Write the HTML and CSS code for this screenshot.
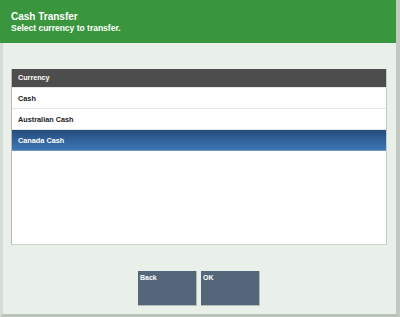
FILE: index.html
```html
<!DOCTYPE html>
<html lang="en">
  <head>
    <meta charset="UTF-8" />
    <title>Cash Transfer</title>
    <link rel="stylesheet" href="styles.css">
  </head>
  <body>
    <div class="screen">
      <div class="header">
        <h1>Cash Transfer</h1>
        <p>Select currency to transfer.</p>
      </div>
      <div class="content">
        <div class="list">
          <div class="list-head">Currency</div>
          <div class="row">Cash</div>
          <div class="row">Australian Cash</div>
          <div class="row selected">Canada Cash</div>
        </div>
        <div class="buttons">
          <button class="btn">Back</button>
          <button class="btn">OK</button>
        </div>
      </div>
    </div>
  </body>
</html>
```

FILE: styles.css
```css
* {
  box-sizing: border-box;
  margin: 0;
  padding: 0;
  font-family: "Liberation Sans", Arial, sans-serif;
}

body {
  width: 400px;
  height: 317px;
  overflow: hidden;
  background: #e9f0e9;
}

.screen {
  height: 317px;
  display: flex;
  flex-direction: column;
  border-left: 3px solid #d5dcd5;
  border-right: 4px solid #c3c8c3;
  border-bottom: 3px solid #b9c2b9;
}

.header {
  background: #3a963d;
  color: #fff;
  height: 43px;
  margin-left: -3px;
  padding: 11px 8px 0 11px;
}

.header h1 {
  font-size: 10px;
  font-weight: bold;
  line-height: 12px;
}

.header p {
  font-size: 8.5px;
  font-weight: bold;
  line-height: 11px;
}

.content {
  flex: 1;
  display: flex;
  flex-direction: column;
  padding: 26px 9px 0 8px;
}

.list {
  height: 176px;
  background: #fff;
  border-left: 1px solid #b8bcb8;
  border-right: 1px solid #c8ccc8;
  border-bottom: 1px solid #d0d4d0;
}

.list-head {
  height: 19px;
  background: #4d4d4d;
  color: #fff;
  font-size: 7.2px;
  font-weight: bold;
  line-height: 18px;
  padding-left: 6px;
  border-bottom: 1px solid #e6e6e6;
}

.row {
  height: 21px;
  font-size: 7.3px;
  font-weight: bold;
  color: #222;
  line-height: 21px;
  padding-left: 6px;
  border-bottom: 1px solid #e4e6e4;
}

.row.selected {
  background: linear-gradient(#264c7c, #3c77b6);
  color: #fff;
  border-bottom: 1px solid #6f95c2;
}

.buttons {
  display: flex;
  gap: 4px;
  margin-top: 26px;
  padding-left: 127px;
}

.btn {
  width: 59px;
  height: 35px;
  background: #546679;
  color: #fff;
  border: none;
  border-right: 1px solid #b5bdb5;
  border-bottom: 1px solid #b5bdb5;
  font-size: 7px;
  font-weight: bold;
  display: flex;
  align-items: flex-start;
  padding: 3px 2px;
}
```
